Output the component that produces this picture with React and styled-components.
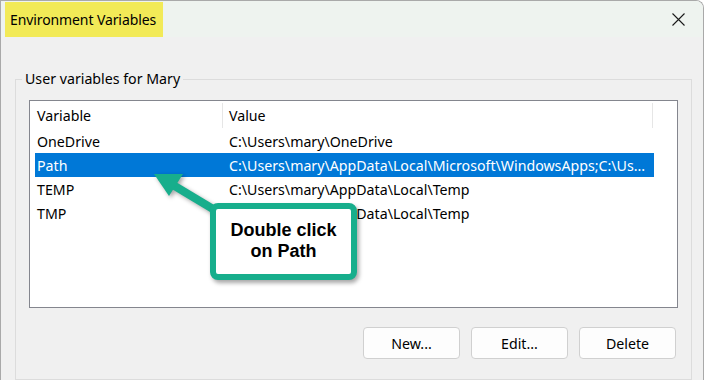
import styled, { createGlobalStyle } from "styled-components";

const GlobalStyle = createGlobalStyle`
  html, body {
    margin: 0;
    padding: 0;
    background: #ffffff;
    overflow: hidden;
  }
  * {
    box-sizing: border-box;
  }
`;

const uiFont = `"Noto Sans", "Open Sans", sans-serif`;

const Window = styled.div`
  position: relative;
  width: 704px;
  height: 380px;
  border: 1px solid #a9a9a9;
  border-bottom: none;
  border-top-right-radius: 8px;
  overflow: hidden;
  font-family: ${uiFont};
  color: #000;
  display: flex;
  flex-direction: column;
`;

const TitleBar = styled.div`
  height: 36px;
  flex-shrink: 0;
  background: #eef3ef;
  display: flex;
  align-items: stretch;
  justify-content: space-between;
  padding-left: 4px;
`;

const TitleText = styled.div`
  display: flex;
  align-items: center;
  margin-top: 1px;
  padding: 0 7px 0 5px;
  background: #f2ea57;
  font-size: 14px;
  letter-spacing: -0.1px;
`;

const CloseButton = styled.div`
  width: 46px;
  display: flex;
  align-items: center;
  justify-content: center;
  padding-right: 4px;
`;

const Body = styled.div`
  flex: 1;
  background: #f0f0f0;
  padding: 32px 11px 0 14px;
`;

const GroupBox = styled.fieldset`
  margin: 0;
  border: 1px solid #dcdcdc;
  padding: 11px 13px 20px 13px;
  min-width: 0;
`;

const Legend = styled.legend`
  margin-left: -7px;
  padding: 0 3px;
  font-size: 14.2px;
  line-height: 20px;
`;

const ListBox = styled.div`
  height: 208px;
  background: #ffffff;
  border: 1px solid #84868e;
  padding: 1px 0 0 5px;
  font-size: 14.2px;
`;

const HeaderRow = styled.div`
  display: grid;
  grid-template-columns: 188px 430px;
  width: 618px;
  height: 27px;
`;

const HeaderCell = styled.div`
  display: flex;
  align-items: center;
  padding-left: ${(p) => p.$pad}px;
  margin: 1px 0 1px;
  border-right: 1px solid #e6e6e6;
`;

const Row = styled.div`
  display: grid;
  grid-template-columns: 188px 430px;
  width: 619px;
  height: 24px;
  background: ${(p) => (p.$selected ? "#0078d7" : "transparent")};
  color: ${(p) => (p.$selected ? "#ffffff" : "#000000")};
`;

const Cell = styled.div`
  display: flex;
  align-items: center;
  padding-left: ${(p) => p.$pad}px;
  white-space: nowrap;
  overflow: hidden;
`;

const ButtonRow = styled.div`
  display: flex;
  justify-content: flex-end;
  gap: 11px;
  margin-top: 19px;
  padding-right: 2px;
`;

const Button = styled.div`
  width: 97px;
  height: 32px;
  display: flex;
  align-items: center;
  justify-content: center;
  background: #fdfdfd;
  border: 1px solid #d0d0d0;
  border-radius: 4px;
  font-size: 14.2px;
`;

const ArrowSvg = styled.svg`
  position: absolute;
  left: 0;
  top: 0;
  filter: drop-shadow(2px 2px 2px rgba(0, 0, 0, 0.35));
`;

const Callout = styled.div`
  position: absolute;
  left: 209px;
  top: 202px;
  width: 147px;
  height: 77px;
  background: #ffffff;
  border: 6px solid #17ae8c;
  border-radius: 8px;
  box-shadow: 2px 3px 4px rgba(0, 0, 0, 0.35);
  display: flex;
  align-items: center;
  justify-content: center;
  text-align: center;
  font-family: "Liberation Sans", Arial, sans-serif;
  font-weight: bold;
  font-size: 18px;
  line-height: 21px;
  padding-bottom: 1px;
`;

const rows = [
  { name: "OneDrive", value: "C:\\Users\\mary\\OneDrive" },
  {
    name: "Path",
    value: "C:\\Users\\mary\\AppData\\Local\\Microsoft\\WindowsApps;C:\\Us...",
    selected: true,
  },
  { name: "TEMP", value: "C:\\Users\\mary\\AppData\\Local\\Temp" },
  { name: "TMP", value: "C:\\Users\\mary\\AppData\\Local\\Temp" },
];

const App = () => {
  return (
    <>
      <GlobalStyle />
      <Window>
        <TitleBar>
          <TitleText>Environment Variables</TitleText>
          <CloseButton>
            <svg width="13" height="13" viewBox="0 0 13 13">
              <path d="M0.5 0.5 L12.5 12.5 M12.5 0.5 L0.5 12.5" stroke="#1a1a1a" strokeWidth="1.1" fill="none" />
            </svg>
          </CloseButton>
        </TitleBar>
        <Body>
          <GroupBox>
            <Legend>User variables for Mary</Legend>
            <ListBox>
              <HeaderRow>
                <HeaderCell $pad={2}>Variable</HeaderCell>
                <HeaderCell $pad={6}>Value</HeaderCell>
              </HeaderRow>
              {rows.map((r) => (
                <Row key={r.name} $selected={r.selected}>
                  <Cell $pad={2}>{r.name}</Cell>
                  <Cell $pad={6}>{r.value}</Cell>
                </Row>
              ))}
            </ListBox>
            <ButtonRow>
              <Button>New...</Button>
              <Button>Edit...</Button>
              <Button>Delete</Button>
            </ButtonRow>
          </GroupBox>
        </Body>
        <ArrowSvg width="240" height="230" viewBox="0 0 240 230">
          <line x1="172" y1="184" x2="222" y2="214" stroke="#17ae8c" strokeWidth="8" />
          <polygon points="153,173 182,173 168,195" fill="#17ae8c" />
        </ArrowSvg>
        <Callout>
          Double click
          <br />
          on Path
        </Callout>
      </Window>
    </>
  );
};

export default App;
